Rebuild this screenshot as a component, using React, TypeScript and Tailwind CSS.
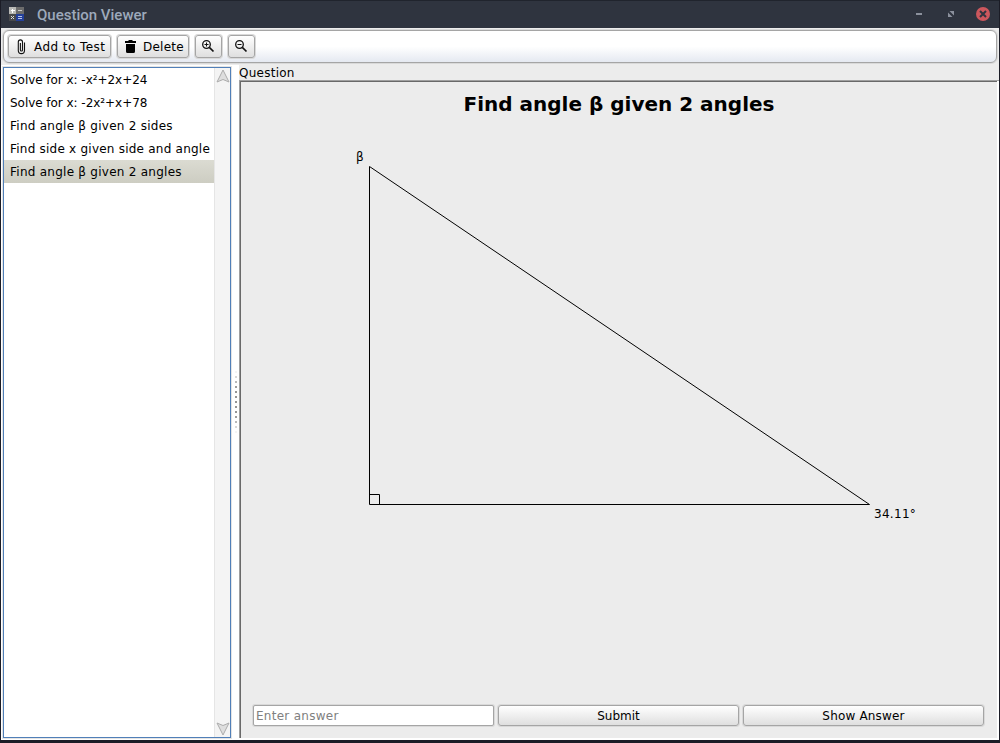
import type { ReactNode } from "react";

const questions = [
  { text: "Solve for x: -x²+2x+24", spacing: "tracking-[-0.04px]" },
  { text: "Solve for x: -2x²+x+78", spacing: "tracking-[-0.04px]" },
  { text: "Find angle β given 2 sides", spacing: "tracking-[0.26px]" },
  { text: "Find side x given side and angle", spacing: "tracking-[0.23px]" },
  { text: "Find angle β given 2 angles", spacing: "tracking-[0.26px]" },
];

const dots = [
  "bg-[#f4f4f4]", "bg-[#d8d8d8]", "bg-[#b8b8b8]", "bg-[#9c9c9c]", "bg-[#949494]", "bg-[#949494]", "bg-[#949494]",
  "bg-[#949494]", "bg-[#949494]", "bg-[#9c9c9c]", "bg-[#b8b8b8]", "bg-[#d8d8d8]", "bg-[#f4f4f4]",
];

function Button({ children, className }: { children?: ReactNode; className: string }) {
  return (
    <button
      className={`flex items-center rounded-[3px] border border-[#a5a5a5] bg-linear-to-b from-white to-[#dfdfdf] shadow-[0_0_0_1px_#d9d9d9] ${className}`}
    >
      {children}
    </button>
  );
}

function TitleBar() {
  return (
    <header className="flex h-7 shrink-0 items-center border-t border-[#20242d] bg-[#2f343f] pb-px pl-2 pr-[9px]">
      <svg width="15" height="14" viewBox="0 0 15 14" shapeRendering="crispEdges">
        <path fill="#b9b9b6" d="M0 0h7v7H0z" />
        <path fill="#6c6c6c" d="M7 0h8v7H7z" />
        <path fill="#48494b" d="M0 7h7v7H0z" />
        <path fill="#24409a" d="M7 7h8v7H7z" />
        <path stroke="#fff" d="M2 3.500h4M3.500 2v4" />
        <path stroke="#ccc" d="M9 3.500h4" />
        <path stroke="#ddd" d="m2 9 3 3m0-3-3 3" />
        <path stroke="#b7c2e6" d="M9 9.500h4M9 11.500h4" />
      </svg>
      <h1 className="ml-[13px] grow pt-[2px] font-['Roboto'] text-[15px] font-medium leading-none text-[#9da9bb]">
        Question Viewer
      </h1>
      <svg width="76" height="14" viewBox="0 0 76 14">
        <path fill="#8c919d" d="M2 6h6v2H2zM35.500 4H40v4.500zM34 5.500V10h4.500z" />
        <circle cx="69" cy="7" r="7" fill="#cc575d" />
        <path stroke="#2f343f" strokeWidth="2" d="m66 4 6 6m0-6-6 6" />
      </svg>
    </header>
  );
}

function Magnifier({ plus = false }: { plus?: boolean }) {
  return (
    <svg className="-mt-px" width="13" height="13" viewBox="0 0 13 13" fill="none" stroke="#111">
      <circle cx="4.500" cy="4.500" r="3.800" strokeWidth="1.300" />
      <path strokeWidth="1.700" d="m7.300 7.300 4.200 4.200" />
      <path strokeWidth="1" d={plus ? "M2.500 4.500h4M4.500 2.500v4" : "M2.500 4.500h4"} />
    </svg>
  );
}

function Toolbar() {
  return (
    <div className="h-[37px] shrink-0 bg-[#ececec] px-[2px] pt-[2px]">
      <div className="flex h-[33px] items-center gap-[6px] rounded-[6px] border border-[#a5a5a5] bg-linear-to-b from-white from-50% to-[#e5e9f1] pl-1 shadow-[0_0_0_1px_#d9d9d9]">
        <Button className="h-[23px] w-[103px] pl-[6px]">
          <svg width="14" height="16" viewBox="0 0 14 16" fill="none" stroke="#111" strokeWidth="1.1">
            <path d="M9.500 3.500v8a3.100 3.100 0 0 1-6.200 0V3a2.100 2.100 0 0 1 4.200 0v8a1.050 1.050 0 0 1-2.100 0V4" />
          </svg>
          <span className="ml-[5px] whitespace-pre tracking-[0.43px]">Add to Test</span>
        </Button>
        <Button className="h-[23px] w-[72px] pl-[6px]">
          <svg width="12" height="14" viewBox="0 0 12 14">
            <path d="M1 1h3l1-1h3l1 1h3v2H1zM2 4h9v7.500a1.500 1.500 0 0 1-1.500 1.500h-6A1.500 1.500 0 0 1 2 11.500z" />
          </svg>
          <span className="ml-[7px] tracking-[0.25px]">Delete</span>
        </Button>
        <Button className="h-[23px] w-[27px] pl-[6px]">
          <Magnifier plus />
        </Button>
        <Button className="h-[23px] w-[27px] pl-[6px]">
          <Magnifier />
        </Button>
      </div>
    </div>
  );
}

function QuestionList() {
  return (
    <aside className="flex h-[671px] w-[228px] shrink-0 border border-[#507fb8] shadow-[0_0_0_1px_#e4e4e4]">
      <ul className="w-[210px] bg-white">
        {questions.map((q, i) => (
          <li
            key={q.text}
            className={`flex h-[23px] items-center whitespace-pre pl-[6px] ${q.spacing} ${i === 4 ? "bg-linear-to-b from-[#dbdbd2] to-[#cdcdc2]" : ""}`}
          >
            {q.text}
          </li>
        ))}
      </ul>
      <div className="flex w-4 flex-col items-center justify-between border-l border-[#e5e5e5] bg-[#f4f4f4] py-[1px]">
        <svg width="14" height="14" viewBox="0 0 14 14">
          <path fill="#dedede" stroke="#acacac" d="m7 1 6 12-6-2.500L1 13z" />
        </svg>
        <svg width="14" height="14" viewBox="0 0 14 14">
          <path fill="#dedede" stroke="#acacac" d="M7 13 1 1l6 2.500L13 1z" />
        </svg>
      </div>
    </aside>
  );
}

function QuestionPanel() {
  return (
    <main className="flex grow flex-col">
      <div className="flex h-[15px] items-center bg-[#ececec] tracking-[0.25px]">Question</div>
      <section className="flex h-[658px] border-l border-t border-[#a0a0a0]">
        <div className="mr-[2px] flex grow flex-col border-l border-t border-[#696969] bg-[#ececec]">
          <h2 className="flex h-[44px] items-center justify-center text-[20px] font-bold">Find angle β given 2 angles</h2>
          <svg className="shrink-0" width="756" height="420" viewBox="241 126 756 420">
            <path fill="none" stroke="#000" strokeWidth="1" d="M369.500 166.500v338h500zM369.500 494.500h10v10" />
            <text x="356" y="161" className="text-[12px]">β</text>
            <text x="874" y="518" className="text-[12px] tracking-[0.3px]">34.11°</text>
          </svg>
          <div className="mb-3 mt-auto flex gap-1 pl-3">
            <input
              className="h-[21px] w-[241px] rounded-[2px] border border-[#a5a5a5] bg-white pl-[2px] tracking-[0.27px] shadow-[0_0_0_1px_#d9d9d9] outline-none placeholder:text-[#808080]"
              placeholder="Enter answer"
            />
            <Button className="h-[21px] w-[241px] justify-center">Submit</Button>
            <Button className="h-[21px] w-[241px] justify-center tracking-[0.17px]">Show Answer</Button>
          </div>
        </div>
      </section>
    </main>
  );
}

export default function App() {
  return (
    <div className="flex h-[743px] w-[1000px] flex-col overflow-hidden border-x border-b-[3px] border-[#1b1c26] bg-white font-['DejaVu_Sans',sans-serif] text-[12px] leading-none text-black">
      <TitleBar />
      <Toolbar />
      <div className="flex h-[675px] shrink-0">
        <div className="flex pl-[2px] pt-[2px]">
          <QuestionList />
        </div>
        <div className="flex w-2 shrink-0 flex-col items-center gap-[3px] pl-px pt-[306px]">
          {dots.map((c, i) => (
            <i key={i} className={`h-[2px] w-[2px] shrink-0 ${c}`} />
          ))}
        </div>
        <QuestionPanel />
      </div>
    </div>
  );
}
